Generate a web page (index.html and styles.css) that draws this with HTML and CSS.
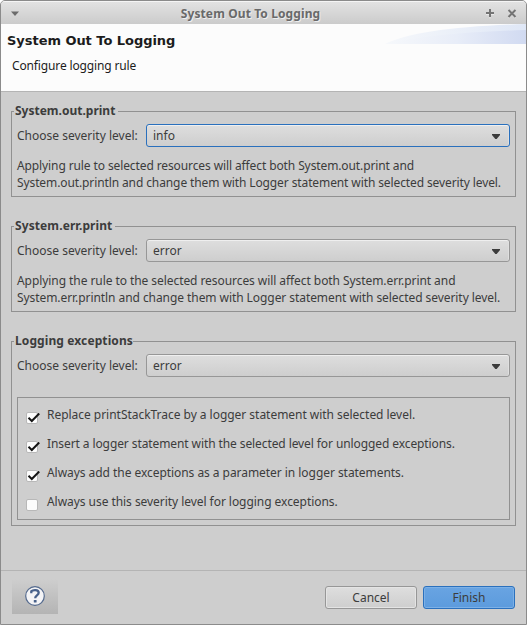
FILE: index.html
```html
<!DOCTYPE html>
<html lang="en">
<head>
<meta charset="utf-8">
<title>System Out To Logging</title>
<link rel="stylesheet" href="styles.css">
</head>
<body>
<div class="window">
  <header class="titlebar">
    <svg class="menu-icon" width="10" height="6" viewBox="0 0 10 6"><path d="M1 .5h8L5 5z" fill="#6b6b6b"/></svg>
    <span class="window-title">System Out To Logging</span>
    <svg width="10" height="10" viewBox="0 0 10 10"><path d="M1 5.5h8M5 1.5v8" stroke="#fff" stroke-width="1" opacity=".5"/><path d="M5 0v8M1 4h8" stroke="#747474" stroke-width="2"/></svg>
    <svg class="close-icon" width="10" height="10" viewBox="0 0 10 10"><path d="M1.5 2l7 7M8.5 2l-7 7" stroke="#fff" stroke-width="1.5" opacity=".5"/><path d="M1.5 1l7 7M8.5 1l-7 7" stroke="#747474" stroke-width="2"/></svg>
  </header>
  <div class="banner">
    <div>
      <h1>System Out To Logging</h1>
      <p>Configure logging rule</p>
    </div>
    <svg class="swoosh" width="141" height="20" viewBox="0 0 141 20">
      <defs>
        <linearGradient id="outer"><stop offset="0" stop-color="#f6f8fb"/><stop offset="1" stop-color="#dfe7f6"/></linearGradient>
        <linearGradient id="inner"><stop offset="0" stop-color="#f6f8fb"/><stop offset=".5" stop-color="#e8edf8"/><stop offset="1" stop-color="#d1daf1"/></linearGradient>
      </defs>
      <path d="M0 20Q35 3 141 0V20z" fill="url(#outer)"/>
      <path d="M2 20Q45 9 141 6V20z" fill="url(#inner)"/>
    </svg>
  </div>
  <main>
    <section class="group">
      <h2>System.out.print</h2>
      <div class="field"><span>Choose severity level:</span><div class="combo focused">info<svg width="8" height="5" viewBox="0 0 8 5"><path d="M0 0h8v1L4.7 5H3.3L0 1z" fill="#3c3c3c"/></svg></div></div>
      <p class="note condensed">Applying rule to selected resources will affect both System.out.print and<br>System.out.println and change them with Logger statement with selected severity level.</p>
    </section>
    <section class="group">
      <h2 class="wide">System.err.print</h2>
      <div class="field"><span>Choose severity level:</span><div class="combo">error<svg width="8" height="5" viewBox="0 0 8 5"><path d="M0 0h8v1L4.7 5H3.3L0 1z" fill="#3c3c3c"/></svg></div></div>
      <p class="note snug">Applying the rule to the selected resources will affect both System.err.print and<br>System.err.println and change them with Logger statement with selected severity level.</p>
    </section>
    <section class="group tall">
      <h2 class="wide tight">Logging exceptions</h2>
      <div class="field"><span>Choose severity level:</span><div class="combo">error<svg width="8" height="5" viewBox="0 0 8 5"><path d="M0 0h8v1L4.7 5H3.3L0 1z" fill="#3c3c3c"/></svg></div></div>
      <div class="options">
        <div class="option slight"><span class="box"><svg width="14" height="12" viewBox="0 0 14 12"><path d="M1.5 4.8L4.8 8 12.2 .5" fill="none" stroke="#151515" stroke-width="2"/></svg></span>Replace printStackTrace by a logger statement with selected level.</div>
        <div class="option condensed"><span class="box"><svg width="14" height="12" viewBox="0 0 14 12"><path d="M1.5 4.8L4.8 8 12.2 .5" fill="none" stroke="#151515" stroke-width="2"/></svg></span>Insert a logger statement with the selected level for unlogged exceptions.</div>
        <div class="option"><span class="box"><svg width="14" height="12" viewBox="0 0 14 12"><path d="M1.5 4.8L4.8 8 12.2 .5" fill="none" stroke="#151515" stroke-width="2"/></svg></span>Always add the exceptions as a parameter in logger statements.</div>
        <div class="option"><span class="box"></span>Always use this severity level for logging exceptions.</div>
      </div>
    </section>
  </main>
  <footer>
    <div class="help">
      <svg width="20" height="20" viewBox="0 0 20 20"><circle cx="10" cy="10" r="9.3" fill="#f4f4f6" stroke="#546a8e" stroke-width="1.2"/><path d="M6.3 7.2V5.3C7.5 3.9 13.7 3 13.7 6.8c0 2.6-3.5 2.7-3.5 5.4" fill="none" stroke="#48618a" stroke-width="2.3"/><rect x="8.8" y="14" width="2.8" height="2.6" rx=".6" fill="#48618a"/></svg>
    </div>
    <div class="button">Cancel</div>
    <div class="button primary">Finish</div>
  </footer>
</div>
</body>
</html>
```

FILE: styles.css
```css
* { box-sizing: border-box; }
body {
  margin: 0;
  background: #fff;
  font: 12px/17px "Noto Sans", sans-serif;
  color: #3c3c3c;
}
h1, h2, p { margin: 0; }
svg { display: block; flex: none; }
.window {
  width: 527px;
  height: 625px;
  display: flex;
  flex-direction: column;
  border: 1px solid #8b8b8b;
  border-radius: 5px 5px 0 0;
  background: #cecece;
  overflow: hidden;
}
.titlebar {
  height: 23px;
  display: flex;
  align-items: center;
  padding: 1px 9px 0 9px;
  border-top: 1px solid #f5f5f5;
  background: linear-gradient(#e2e2e2, #cbcbcb);
}
.window-title {
  flex: 1;
  padding-right: 4px;
  text-align: center;
  font-weight: bold;
  letter-spacing: .1px;
  color: #696969;
  text-shadow: 1px 1px 0 #eee;
}
.close-icon { margin-left: 12px; }
.banner {
  height: 68px;
  display: flex;
  justify-content: space-between;
  background: #fcfcfc;
  border-bottom: 1px solid #b4b4b4;
  color: #1c1c1c;
}
.banner h1 {
  padding: 8px 0 0 6px;
  font: bold 13px/17px "DejaVu Sans", sans-serif;
  letter-spacing: -.04px;
}
.banner p {
  padding: 8px 0 0 11px;
  letter-spacing: -.14px;
}
main {
  flex: 1;
  padding: 19px 10px 0;
}
.group {
  height: 86px;
  margin-bottom: 29px;
  border: 1px solid #919191;
  padding: 0 5px;
}
.group.tall { height: 185px; margin-bottom: 0; }
.group h2 {
  width: max-content;
  margin: -10px 0 0 -3px;
  padding: 0 3px 0 1px;
  background: #cecece;
  font-size: 12px;
  line-height: 17px;
}
.group h2.wide { letter-spacing: .1px; }
.group h2.tight { padding-right: 0; }
.field {
  display: flex;
  justify-content: space-between;
  align-items: center;
  margin-top: 5px;
}
.combo {
  width: 364px;
  height: 23px;
  display: flex;
  justify-content: space-between;
  align-items: center;
  padding: 0 9px 0 6px;
  border: 1px solid #979797;
  border-radius: 3px;
  background: linear-gradient(#dedede, #cecece);
  box-shadow: inset 0 1px #efefef, inset -1px 0 #dfdfdf;
}
.combo svg { margin-top: 2px; }
.combo.focused { border-color: #2a70bd; }
.note {
  margin-top: 10px;
  white-space: nowrap;
}
.options {
  height: 123px;
  margin-top: 20px;
  padding: 8px;
  display: grid;
  grid-template-rows: repeat(4, 17px);
  row-gap: 12px;
  border: 1px solid #919191;
}
.option {
  display: flex;
  gap: 9px;
  white-space: nowrap;
  letter-spacing: -.05px;
}
.note.condensed { letter-spacing: -.107px; }
.note.snug { letter-spacing: -.067px; }
.option.condensed { letter-spacing: -.093px; }
.option.slight { letter-spacing: -.03px; }
.box {
  width: 12px;
  height: 12px;
  margin-top: 6px;
  border: 1px solid #b8b8b8;
  border-radius: 2px;
  background: #fcfcfc;
}
footer {
  height: 54px;
  display: flex;
  gap: 6px;
  padding: 8px 11px 0 11px;
  border-top: 1px solid #b4b4b4;
}
.help {
  width: 46px;
  height: 35px;
  margin-right: auto;
  display: flex;
  justify-content: center;
  padding-top: 7px;
  background: linear-gradient(#cecece, #b4b4b4);
}
.button {
  width: 92px;
  height: 23px;
  margin-top: 7px;
  border: 1px solid #979797;
  border-radius: 3px;
  background: linear-gradient(#dedede, #cecece);
  box-shadow: inset 0 0 0 1px #e4e4e4;
  line-height: 21px;
  text-align: center;
}
.button.primary {
  border-color: #2a70bd;
  background: linear-gradient(#69a4e2, #5c9bdd);
  box-shadow: inset 0 0 0 1px #7cb0e6;
}
```
